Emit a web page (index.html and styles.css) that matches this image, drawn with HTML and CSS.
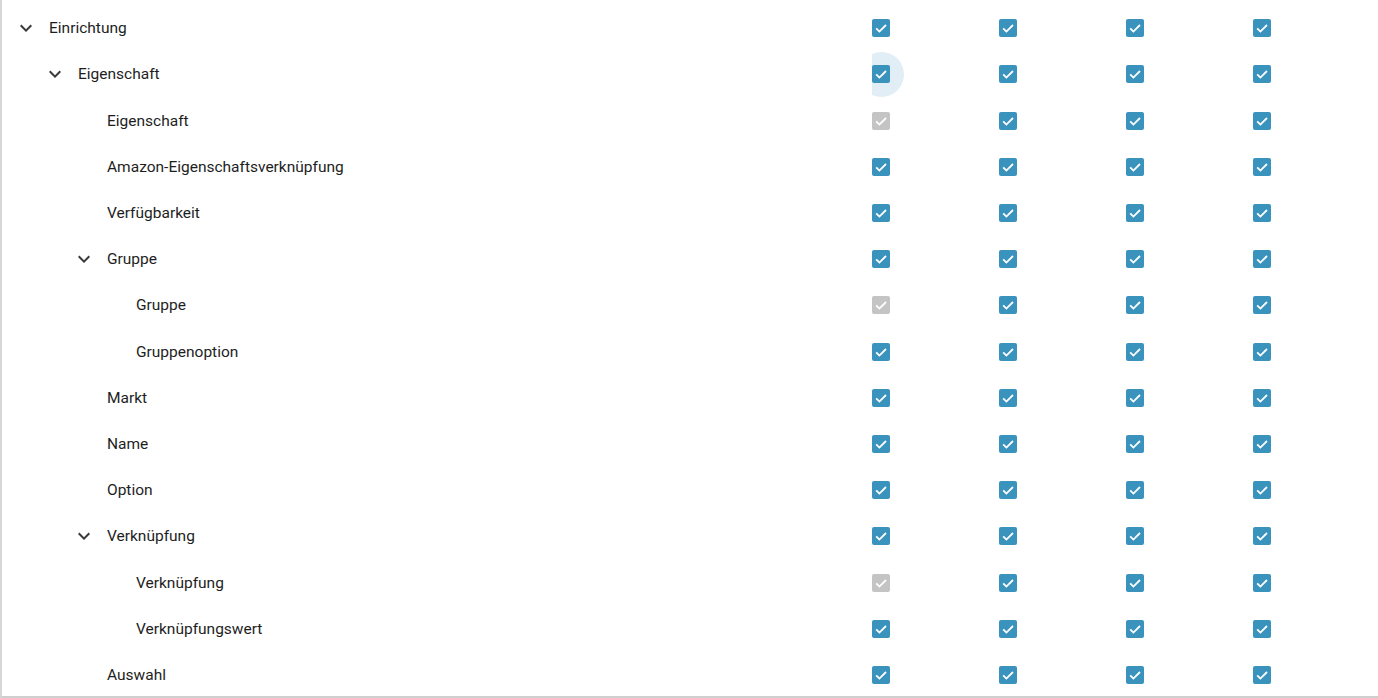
FILE: index.html
```html
<!DOCTYPE html>
<html lang="de">
<head>
<meta charset="utf-8">
<link rel="stylesheet" href="styles.css">
</head>
<body>
<svg width="0" height="0" class="defs">
  <defs>
    <symbol id="chev" viewBox="0 0 24 24"><path d="M16.59 8.59L12 13.17 7.41 8.59 6 10l6 6 6-6z"/></symbol>
    <symbol id="cb" viewBox="0 0 18 18"><rect x="0" y="0" width="18" height="18" rx="2"/><path d="M4.2 9.4l3.2 3.2 6.6-6.6" fill="none" stroke="#fff" stroke-width="1.8"/></symbol>
  </defs>
</svg>
<div class="tree">
  <div class="row">
    <div class="label lv0"><svg class="chev"><use href="#chev"/></svg><span>Einrichtung</span></div>
    <div class="cell"><svg class="cb"><use href="#cb"/></svg></div>
    <div class="cell"><svg class="cb"><use href="#cb"/></svg></div>
    <div class="cell"><svg class="cb"><use href="#cb"/></svg></div>
    <div class="cell"><svg class="cb"><use href="#cb"/></svg></div>
  </div>
  <div class="row">
    <div class="label lv1"><svg class="chev"><use href="#chev"/></svg><span>Eigenschaft</span></div>
    <div class="cell"><span class="ripple"></span><svg class="cb"><use href="#cb"/></svg></div>
    <div class="cell"><svg class="cb"><use href="#cb"/></svg></div>
    <div class="cell"><svg class="cb"><use href="#cb"/></svg></div>
    <div class="cell"><svg class="cb"><use href="#cb"/></svg></div>
  </div>
  <div class="row">
    <div class="label lv2 leaf"><span>Eigenschaft</span></div>
    <div class="cell"><svg class="cb off"><use href="#cb"/></svg></div>
    <div class="cell"><svg class="cb"><use href="#cb"/></svg></div>
    <div class="cell"><svg class="cb"><use href="#cb"/></svg></div>
    <div class="cell"><svg class="cb"><use href="#cb"/></svg></div>
  </div>
  <div class="row">
    <div class="label lv2 leaf"><span>Amazon-Eigenschaftsverknüpfung</span></div>
    <div class="cell"><svg class="cb"><use href="#cb"/></svg></div>
    <div class="cell"><svg class="cb"><use href="#cb"/></svg></div>
    <div class="cell"><svg class="cb"><use href="#cb"/></svg></div>
    <div class="cell"><svg class="cb"><use href="#cb"/></svg></div>
  </div>
  <div class="row">
    <div class="label lv2 leaf"><span>Verfügbarkeit</span></div>
    <div class="cell"><svg class="cb"><use href="#cb"/></svg></div>
    <div class="cell"><svg class="cb"><use href="#cb"/></svg></div>
    <div class="cell"><svg class="cb"><use href="#cb"/></svg></div>
    <div class="cell"><svg class="cb"><use href="#cb"/></svg></div>
  </div>
  <div class="row">
    <div class="label lv2"><svg class="chev"><use href="#chev"/></svg><span>Gruppe</span></div>
    <div class="cell"><svg class="cb"><use href="#cb"/></svg></div>
    <div class="cell"><svg class="cb"><use href="#cb"/></svg></div>
    <div class="cell"><svg class="cb"><use href="#cb"/></svg></div>
    <div class="cell"><svg class="cb"><use href="#cb"/></svg></div>
  </div>
  <div class="row">
    <div class="label lv3 leaf"><span>Gruppe</span></div>
    <div class="cell"><svg class="cb off"><use href="#cb"/></svg></div>
    <div class="cell"><svg class="cb"><use href="#cb"/></svg></div>
    <div class="cell"><svg class="cb"><use href="#cb"/></svg></div>
    <div class="cell"><svg class="cb"><use href="#cb"/></svg></div>
  </div>
  <div class="row">
    <div class="label lv3 leaf"><span>Gruppenoption</span></div>
    <div class="cell"><svg class="cb"><use href="#cb"/></svg></div>
    <div class="cell"><svg class="cb"><use href="#cb"/></svg></div>
    <div class="cell"><svg class="cb"><use href="#cb"/></svg></div>
    <div class="cell"><svg class="cb"><use href="#cb"/></svg></div>
  </div>
  <div class="row">
    <div class="label lv2 leaf"><span>Markt</span></div>
    <div class="cell"><svg class="cb"><use href="#cb"/></svg></div>
    <div class="cell"><svg class="cb"><use href="#cb"/></svg></div>
    <div class="cell"><svg class="cb"><use href="#cb"/></svg></div>
    <div class="cell"><svg class="cb"><use href="#cb"/></svg></div>
  </div>
  <div class="row">
    <div class="label lv2 leaf"><span>Name</span></div>
    <div class="cell"><svg class="cb"><use href="#cb"/></svg></div>
    <div class="cell"><svg class="cb"><use href="#cb"/></svg></div>
    <div class="cell"><svg class="cb"><use href="#cb"/></svg></div>
    <div class="cell"><svg class="cb"><use href="#cb"/></svg></div>
  </div>
  <div class="row">
    <div class="label lv2 leaf"><span>Option</span></div>
    <div class="cell"><svg class="cb"><use href="#cb"/></svg></div>
    <div class="cell"><svg class="cb"><use href="#cb"/></svg></div>
    <div class="cell"><svg class="cb"><use href="#cb"/></svg></div>
    <div class="cell"><svg class="cb"><use href="#cb"/></svg></div>
  </div>
  <div class="row">
    <div class="label lv2"><svg class="chev"><use href="#chev"/></svg><span>Verknüpfung</span></div>
    <div class="cell"><svg class="cb"><use href="#cb"/></svg></div>
    <div class="cell"><svg class="cb"><use href="#cb"/></svg></div>
    <div class="cell"><svg class="cb"><use href="#cb"/></svg></div>
    <div class="cell"><svg class="cb"><use href="#cb"/></svg></div>
  </div>
  <div class="row">
    <div class="label lv3 leaf"><span>Verknüpfung</span></div>
    <div class="cell"><svg class="cb off"><use href="#cb"/></svg></div>
    <div class="cell"><svg class="cb"><use href="#cb"/></svg></div>
    <div class="cell"><svg class="cb"><use href="#cb"/></svg></div>
    <div class="cell"><svg class="cb"><use href="#cb"/></svg></div>
  </div>
  <div class="row">
    <div class="label lv3 leaf"><span>Verknüpfungswert</span></div>
    <div class="cell"><svg class="cb"><use href="#cb"/></svg></div>
    <div class="cell"><svg class="cb"><use href="#cb"/></svg></div>
    <div class="cell"><svg class="cb"><use href="#cb"/></svg></div>
    <div class="cell"><svg class="cb"><use href="#cb"/></svg></div>
  </div>
  <div class="row">
    <div class="label lv2 leaf"><span>Auswahl</span></div>
    <div class="cell"><svg class="cb"><use href="#cb"/></svg></div>
    <div class="cell"><svg class="cb"><use href="#cb"/></svg></div>
    <div class="cell"><svg class="cb"><use href="#cb"/></svg></div>
    <div class="cell"><svg class="cb"><use href="#cb"/></svg></div>
  </div>
</div>
</body>
</html>
```
FILE: styles.css
```css
html, body {
  margin: 0;
  padding: 0;
  background: #fff;
  overflow: hidden;
}
.defs {
  position: absolute;
  width: 0;
  height: 0;
}
.tree {
  box-sizing: border-box;
  width: 1378px;
  height: 698px;
  border-left: 2px solid #d6d6d6;
  border-bottom: 2px solid #cfcfcf;
  padding-top: 5.2px;
  font-family: Roboto, "Liberation Sans", sans-serif;
  font-size: 15.5px;
  color: #1e1e1e;
}
.row {
  display: grid;
  grid-template-columns: 870px 127px 126.5px 127.5px 125px;
  height: 46.2px;
}
.label {
  display: flex;
  align-items: center;
  gap: 11px;
  white-space: nowrap;
}
.lv0 { padding-left: 12px; }
.lv1 { padding-left: 41px; }
.lv2 { padding-left: 70px; }
.lv3 { padding-left: 99px; }
.lv2.leaf { padding-left: 105px; }
.lv3.leaf { padding-left: 134px; }
.chev {
  width: 24px;
  height: 24px;
  fill: #3a3a3a;
  flex: none;
}
.cell {
  position: relative;
  overflow: hidden;
  display: flex;
  align-items: center;
}
.cb {
  width: 18px;
  height: 18px;
  fill: #3a93bd;
  position: relative;
}
.cb.off {
  fill: #c4c4c4;
}
.ripple {
  position: absolute;
  left: -13.5px;
  top: 50%;
  width: 45px;
  height: 45px;
  margin-top: -22.5px;
  border-radius: 50%;
  background: #e1eef5;
}
```
